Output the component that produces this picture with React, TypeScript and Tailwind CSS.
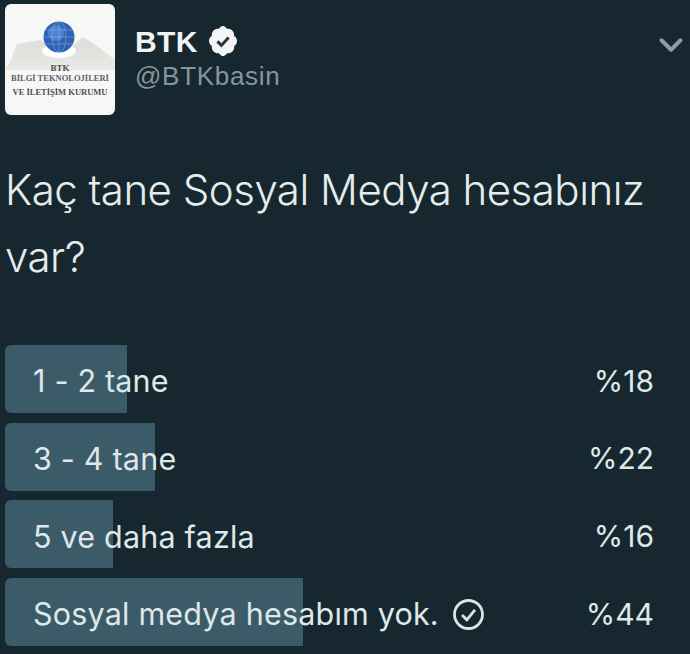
import React from 'react';
import { ChevronDown } from 'lucide-react';

const options = [
  { id: 1, label: '1 - 2 tane', percent: '%18', width: 122 },
  { id: 2, label: '3 - 4 tane', percent: '%22', width: 150 },
  { id: 3, label: '5 ve daha fazla', percent: '%16', width: 108 },
  { id: 4, label: 'Sosyal medya hesabım yok.', percent: '%44', width: 298, voted: true },
];

const Logo = () => (
  <div className="w-[110px] h-[111px] shrink-0 rounded-md bg-[#f7f8f6] flex flex-col items-center overflow-hidden relative">
    <svg width="110" height="72" viewBox="0 0 110 72" className="shrink-0">
      <defs>
        <linearGradient id="wing" x1="0" y1="0" x2="0" y2="1">
          <stop offset="0" stopColor="#dcdcda" />
          <stop offset="1" stopColor="#e9e9e6" />
        </linearGradient>
      </defs>
      <path d="M12 40 L36 36 L48 46 L62 46 L78 33 L92 42 L110 56 L110 66 L0 66 L6 56 Z" fill="url(#wing)" />
      <ellipse cx="54" cy="47" rx="17" ry="7" fill="#ffffff" />
      <circle cx="54" cy="33" r="15.500" fill="#2f62b4" />
      <circle cx="51" cy="29" r="8" fill="#4a82d4" />
      <g stroke="#a9c4e8" strokeWidth="0.6" fill="none" opacity="0.7">
        <ellipse cx="54" cy="33" rx="7" ry="15.500" />
        <path d="M54 18 V48 M39 33 H69 M41 26 H67 M41 40 H67" />
      </g>
    </svg>
    <div className="absolute left-0 right-0 top-[59px] text-center font-['Liberation_Serif',serif] font-bold text-[#4a4f52] leading-[10px]">
      <div className="text-[9px]">BTK</div>
      <div className="text-[8.500px] whitespace-nowrap text-[#5b6166]">BİLGİ TEKNOLOJİLERİ</div>
      <div className="text-[8.500px] whitespace-nowrap mt-[4px]">VE İLETİŞİM KURUMU</div>
    </div>
  </div>
);

const VerifiedBadge = () => (
  <svg width="32" height="32" viewBox="0 0 24 24" className="shrink-0">
    <path
      fill="#f4f6f6"
      d="M22.5 12c0-1.6-.9-3-2.2-3.7.2-1.5-.3-3-1.3-4.100-1.100-1-2.600-1.500-4.100-1.300C14.200 1.600 13 .7 12 .7s-2.500.9-3 2.200c-1.500-.2-3 .3-4.100 1.300-1 1.100-1.500 2.600-1.300 4.100C2.400 9 1.500 10.400 1.500 12s.9 3 2.100 3.700c-.2 1.500.3 3 1.300 4.100 1.100 1 2.600 1.500 4.100 1.300.7 1.300 2.100 2.200 3 2.200s2.300-.9 3-2.200c1.500.2 3-.3 4.100-1.300 1-1.100 1.500-2.600 1.300-4.100 1.300-.7 2.100-2.100 2.100-3.700z"
    />
    <path d="M7.800 12.300l3 3 5.400-6" fill="none" stroke="#26343b" strokeWidth="2.200" />
  </svg>
);

const VotedIcon = () => (
  <svg width="31" height="31" viewBox="0 0 31 31" className="shrink-0">
    <circle cx="15.500" cy="15.500" r="14" fill="none" stroke="#dce5e6" strokeWidth="2.800" />
    <path d="M9 16l4.800 4.800 8.200-10" fill="none" stroke="#dce5e6" strokeWidth="2.800" />
  </svg>
);

export default function App() {
  return (
    <div className="w-[690px] h-[654px] bg-[#16272f] overflow-hidden font-['Liberation_Sans',sans-serif] text-[#dfe7e8] pl-[5px]">
      <div className="flex pt-1">
        <Logo />
        <div className="ml-[20px] pt-[19px] flex-1">
          <div className="flex items-center gap-[9px] h-[36px]">
            <span className="text-[30px] font-bold tracking-[0.4px] text-[#f0f3f3]">BTK</span>
            <VerifiedBadge />
          </div>
          <div className="text-[26px] leading-[34px] text-[#84979f] tracking-[0.7px]">@BTKbasin</div>
        </div>
        <ChevronDown size={38} strokeWidth={2.500} className="text-[#8b9ca3] mt-[22px]" />
      </div>

      <div className="mt-[41px] text-[42px] leading-[67px] text-[#e6ecec] w-[670px] font-['Inter',sans-serif] font-light tracking-[-0.5px]">
        Kaç tane Sosyal Medya hesabınız var?
      </div>

      <div className="mt-[55px] flex flex-col gap-[9.700px] pr-[36px] font-['Inter',sans-serif]">
        {options.map((option) => (
          <div key={option.id} className="relative h-[68px] pt-[4px] flex items-center justify-between">
            <div
              className="absolute left-0 top-0 bottom-0 bg-[#3b5b69] rounded-l-md"
              style={{ width: option.width }}
            />
            <div className="relative flex items-center gap-[14px] pl-[28px] text-[30.500px] tracking-[0.2px]">
              <span>{option.label}</span>
              {option.voted && <VotedIcon />}
            </div>
            <span className="relative text-[30px]">{option.percent}</span>
          </div>
        ))}
      </div>
    </div>
  );
}
